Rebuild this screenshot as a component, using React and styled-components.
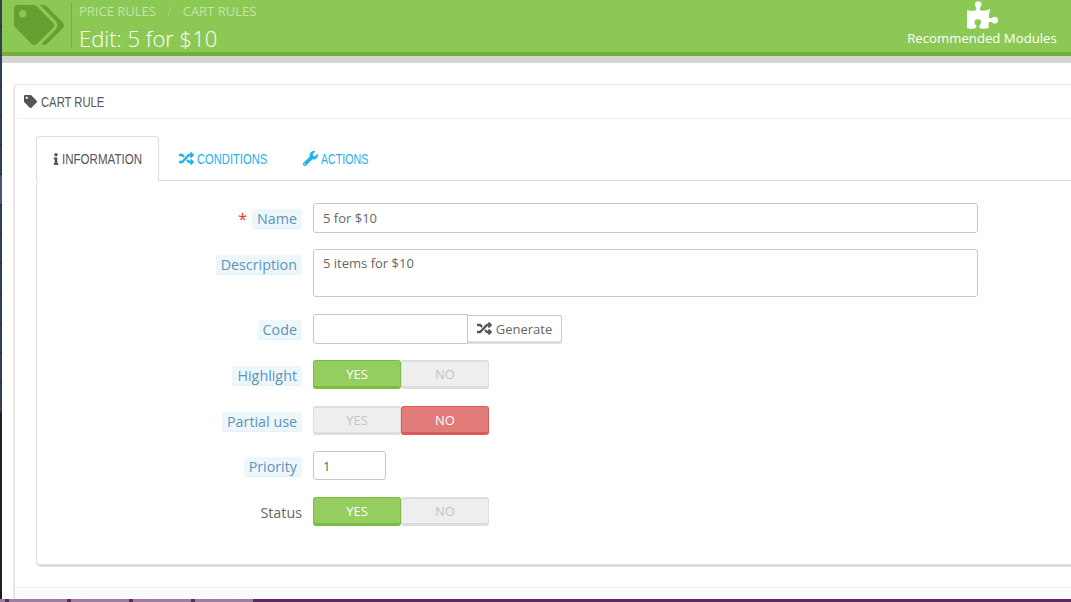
import React from "react";
import styled, { createGlobalStyle } from "styled-components";
import { FaTags, FaTag, FaInfo, FaRandom, FaWrench, FaPuzzlePiece } from "react-icons/fa";

const GlobalStyle = createGlobalStyle`
  html, body {
    margin: 0;
    padding: 0;
    height: 100%;
    overflow: hidden;
    background: #ffffff;
  }
  * {
    box-sizing: border-box;
  }
`;

const stripItems = [0, 1, 2, 3, 4, 5, 6, 7, 8, 9, 10, 11, 12, 13];

function Switch({ on, danger }) {
  return (
    <SwitchBox>
      <SwitchSide $active={on} $tone="green">YES</SwitchSide>
      <SwitchSide $active={!on} $tone={danger ? "red" : "green"}>NO</SwitchSide>
    </SwitchBox>
  );
}

function App() {
  return (
    <Page>
      <GlobalStyle />
      <LeftStrip>
        {stripItems.map((i) => (
          <StripItem key={i} $current={i === 6} />
        ))}
      </LeftStrip>
      <Main>
        <Header>
          <Logo>
            <FaTags size={50} />
          </Logo>
          <Titles>
            <Crumbs>
              <span>PRICE RULES</span>
              <Slash>/</Slash>
              <span>CART RULES</span>
            </Crumbs>
            <Title>Edit: 5 for $10</Title>
          </Titles>
          <Recommended>
            <FaPuzzlePiece size={31} />
            <span>Recommended Modules</span>
          </Recommended>
        </Header>
        <GreyBar />
        <Content>
          <Panel>
            <PanelHeading>
              <FaTag size={13} />
              <Condensed $width={63} $scale={0.75}>CART RULE</Condensed>
            </PanelHeading>
            <Tabs>
              <ActiveTab>
                <InfoIcon />
                <Condensed $width={80} $scale={0.77}>INFORMATION</Condensed>
              </ActiveTab>
              <Tab>
                <FaRandom size={15} />
                <Condensed $width={70} $scale={0.745}>CONDITIONS</Condensed>
              </Tab>
              <Tab>
                <FaWrench size={15} />
                <Condensed $width={47} $scale={0.71}>ACTIONS</Condensed>
              </Tab>
            </Tabs>
            <TabBody>
              <Row $height={30} $after={16}>
                <LabelCell>
                  <Required>*</Required>
                  <Hint>Name</Hint>
                </LabelCell>
                <TextField $width={665}>5 for $10</TextField>
              </Row>
              <Row $height={48} $after={17}>
                <LabelCell>
                  <Hint>Description</Hint>
                </LabelCell>
                <TextArea>5 items for $10</TextArea>
              </Row>
              <Row $height={30} $after={16}>
                <LabelCell>
                  <Hint>Code</Hint>
                </LabelCell>
                <TextField $width={155} $joined />
                <GenerateButton>
                  <FaRandom size={15} />
                  Generate
                </GenerateButton>
              </Row>
              <Row $height={29} $after={17}>
                <LabelCell>
                  <Hint>Highlight</Hint>
                </LabelCell>
                <Switch on />
              </Row>
              <Row $height={29} $after={16}>
                <LabelCell>
                  <Hint>Partial use</Hint>
                </LabelCell>
                <Switch danger />
              </Row>
              <Row $height={29} $after={17}>
                <LabelCell>
                  <Hint>Priority</Hint>
                </LabelCell>
                <TextField $width={73}>1</TextField>
              </Row>
              <Row $height={29} $after={0}>
                <LabelCell>
                  <PlainLabel>Status</PlainLabel>
                </LabelCell>
                <Switch on />
              </Row>
            </TabBody>
            <PanelFooter />
          </Panel>
        </Content>
        <TaskBar>
          <TaskButton $width={5} />
          <TaskButton $width={58} />
          <TaskButton $width={58} />
          <TaskButton $width={58} />
          <TaskButton $width={58} />
        </TaskBar>
      </Main>
    </Page>
  );
}

const Page = styled.div`
  display: flex;
  width: 1071px;
  height: 602px;
  overflow: hidden;
  font-family: "Open Sans", sans-serif;
  font-size: 13px;
  color: #666666;
`;

const LeftStrip = styled.div`
  flex: 0 0 2px;
  height: 599px;
  background: #1d2029;
  overflow: hidden;
`;

const StripItem = styled.div`
  height: 29.7px;
  background: ${(p) => (p.$current ? "#4a5573" : "#323d52")};
  border-bottom: 1px solid #232a38;
  &:first-child {
    margin-top: -3px;
  }
`;

const Main = styled.div`
  flex: 1;
  min-width: 0;
  display: flex;
  flex-direction: column;
`;

const Header = styled.header`
  flex: 0 0 56px;
  display: flex;
  align-items: flex-start;
  background: #8bc954;
  border-bottom: 4px solid #72b03a;
`;

const Logo = styled.div`
  flex: 0 0 70px;
  height: 46px;
  margin-top: 2px;
  padding-left: 12px;
  border-right: 1px solid #72b03a;
  color: #66a033;
  display: flex;
  align-items: center;
`;

const Titles = styled.div`
  flex: 1;
  padding: 3px 0 0 7px;
`;

const Crumbs = styled.div`
  display: flex;
  gap: 11px;
  height: 17px;
  line-height: 17px;
  font-size: 13px;
  color: #c5e4a9;
`;

const Slash = styled.span`
  color: #a9d680;
`;

const Title = styled.h2`
  margin: 5px 0 0;
  font-size: 22px;
  line-height: 26px;
  font-weight: 300;
  color: #ffffff;
`;

const Recommended = styled.div`
  flex: 0 0 150px;
  margin-right: 14px;
  display: flex;
  flex-direction: column;
  align-items: center;
  font-size: 13.2px;
  line-height: 18px;
  white-space: nowrap;
  color: #ffffff;
  svg {
    margin-bottom: -1px;
    height: 30px;
  }
`;

const GreyBar = styled.div`
  flex: 0 0 7px;
  background: #d4d4d4;
`;

const Content = styled.div`
  flex: 1;
  min-height: 0;
  padding: 21px 0 0 11px;
  overflow: hidden;
`;

const Panel = styled.section`
  width: 1100px;
  height: 520px;
  padding: 0 0 0 3px;
  border: solid #e6e6e6;
  border-width: 1px 0 0 2px;
  border-radius: 5px 0 0 0;
  display: flex;
  flex-direction: column;
`;

const PanelHeading = styled.h3`
  flex: 0 0 34px;
  margin: 0;
  display: flex;
  align-items: center;
  gap: 4px;
  padding-left: 6px;
  border-bottom: 1px solid #eeeeee;
  font-family: "Liberation Sans", sans-serif;
  font-size: 15px;
  font-weight: 400;
  color: #555555;
`;

/* no condensed family is installed, so the heading font is squeezed to width */
const Condensed = styled.span`
  display: inline-block;
  width: ${(p) => p.$width}px;
  white-space: nowrap;
  transform: scaleX(${(p) => p.$scale});
  transform-origin: left center;
`;

const Tab = styled.div`
  display: flex;
  align-items: center;
  gap: 3px;
  height: 45px;
  padding: 0 17px;
  margin-right: 2px;
  font-family: "Liberation Sans", sans-serif;
  font-size: 15px;
  color: #25b0ee;
`;

const Tabs = styled.nav`
  display: flex;
  margin: 17px 0 0 18px;
  height: 45px;
  position: relative;
  z-index: 1;
`;

const ActiveTab = styled(Tab)`
  padding: 0 16px 1px;
  margin-right: 3px;
  color: #555555;
  background: #ffffff;
  border: 1px solid #dddddd;
  border-bottom: 0;
  border-radius: 4px 4px 0 0;
`;

const InfoIcon = styled(FaInfo)`
  width: 6px;
  height: 12px;
  flex: none;
`;

const TabBody = styled.div`
  height: 387px;
  margin: -1px 0 0 18px;
  padding: 22px 0 0;
  border: 1px solid #dddddd;
  border-bottom: 3px solid #dddddd;
  border-right: 0;
  border-radius: 5px 0 0 5px;
`;

const Row = styled.div`
  display: flex;
  align-items: flex-start;
  height: ${(p) => p.$height}px;
  margin-bottom: ${(p) => p.$after}px;
`;

const LabelCell = styled.div`
  flex: 0 0 265px;
  margin-right: 11px;
  padding-top: 6px;
  display: flex;
  justify-content: flex-end;
  align-items: center;
  gap: 5px;
`;

const Hint = styled.span`
  padding: 0 5px;
  height: 20px;
  line-height: 20px;
  font-size: 14.3px;
  color: #5c94bb;
  background: #edf7fb;
  border-radius: 3px;
  box-shadow: inset 0 -1px 0 #e2f0f7;
`;

const PlainLabel = styled.span`
  height: 20px;
  line-height: 20px;
  font-size: 14.3px;
  color: #666666;
`;

const Required = styled.span`
  font-size: 16px;
  line-height: 19px;
  color: #ef3030;
`;

const TextField = styled.div`
  width: ${(p) => p.$width}px;
  height: 100%;
  padding: 0 9px;
  display: flex;
  align-items: center;
  font-size: 13px;
  color: #666666;
  background: #ffffff;
  border: 1px solid #c7c7c7;
  border-radius: ${(p) => (p.$joined ? "3px 0 0 3px" : "3px")};
`;

const TextArea = styled.div`
  width: 665px;
  height: 100%;
  padding: 5px 9px;
  font-size: 13px;
  line-height: 17px;
  color: #666666;
  border: 1px solid #c7c7c7;
  border-radius: 3px;
`;

const GenerateButton = styled.div`
  width: 94px;
  height: 29px;
  margin-top: 1px;
  display: flex;
  align-items: center;
  justify-content: center;
  gap: 4px;
  font-size: 13px;
  color: #666666;
  border: 1px solid #cccccc;
  border-left: 0;
  border-bottom: 3px solid #dddddd;
  border-radius: 0 3px 3px 0;
  svg {
    color: #555555;
  }
`;

const SwitchBox = styled.div`
  display: flex;
  width: 176px;
  height: 29px;
`;

const SwitchSide = styled.div`
  flex: 1;
  display: flex;
  align-items: center;
  justify-content: center;
  font-size: 13px;
  font-weight: ${(p) => (p.$active ? 500 : 400)};
  color: ${(p) => (p.$active ? "#ffffff" : "#c4c4c4")};
  background: ${(p) =>
    !p.$active ? "#eeeeee" : p.$tone === "red" ? "#e27c79" : "#93ce5f"};
  border: 1px solid
    ${(p) => (!p.$active ? "#dddddd" : p.$tone === "red" ? "#dc5b57" : "#7cbc43")};
  border-bottom-width: 3px;
  border-top-width: ${(p) => (p.$active ? "1px" : "2px")};
  border-radius: 3px;
`;

const PanelFooter = styled.div`
  flex: 1;
  margin: 20px 0 0 -3px;
  background: #fafbfe;
  border-top: 1px solid #eeeeee;
`;

const TaskBar = styled.div`
  flex: 0 0 3px;
  margin-left: -2px;
  display: flex;
  gap: 4px;
  background: #5c2a60;
  overflow: hidden;
`;

const TaskButton = styled.div`
  width: ${(p) => p.$width}px;
  height: 3px;
  background: #a07ba6;
`;

export default App;
